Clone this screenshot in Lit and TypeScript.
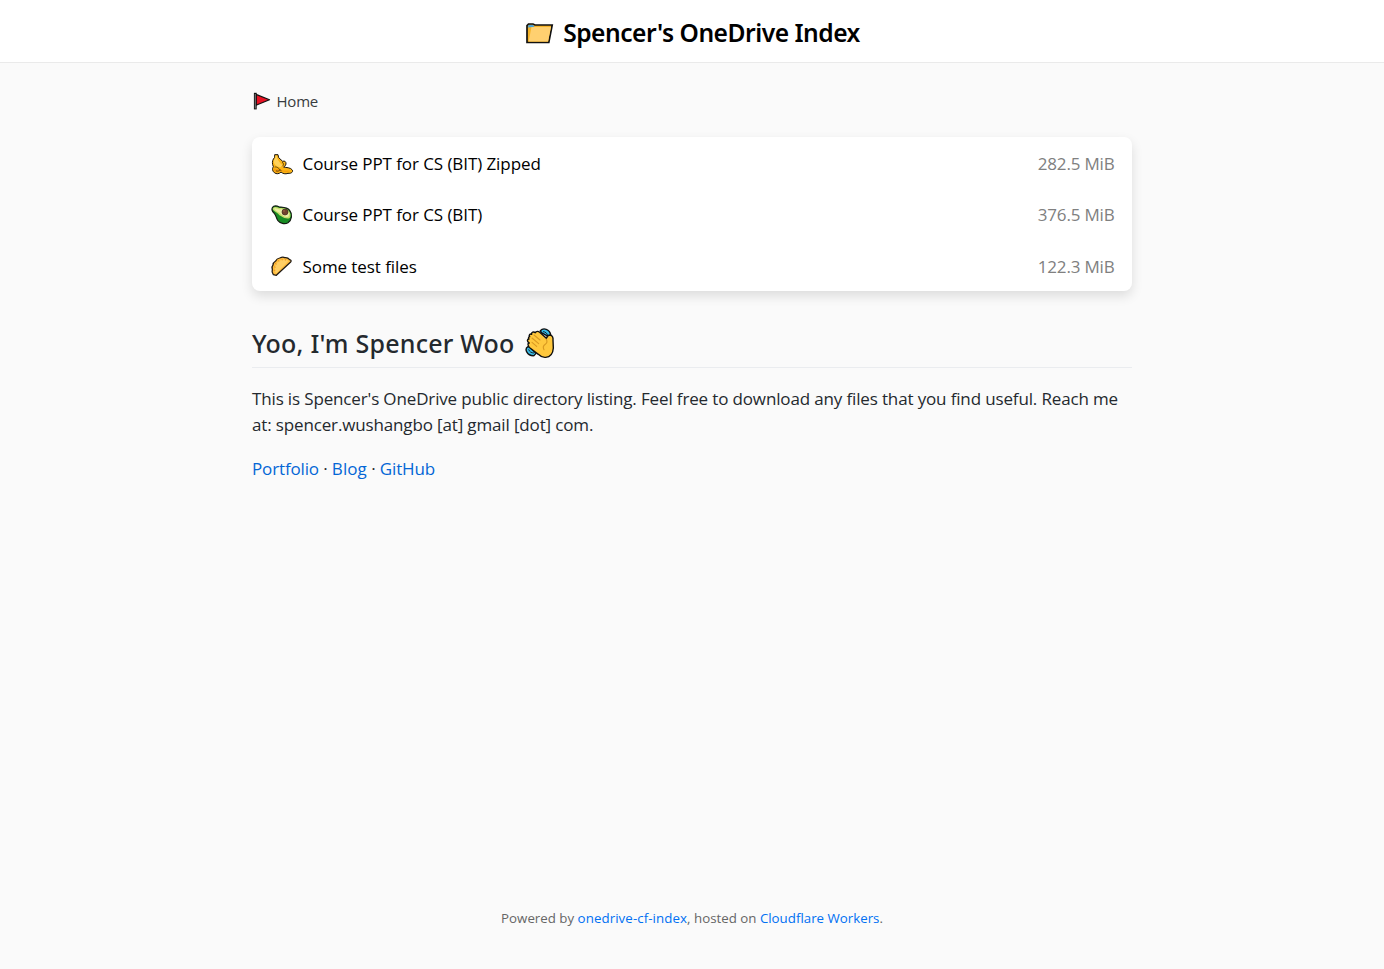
import { LitElement, html, css, svg } from "lit";
import { customElement } from "lit/decorators.js";

const banana = svg`
  <path d="M38 28 L48 28 L50 37 L62 48 C68 45 73 50 72 56 C71 61 68 63 65 65 C72 67 86 66 91 74 C94 80 88 85 78 84 C70 87 62 85 57 80 C52 86 43 87 37 82 C31 77 30 70 34 64 L32 58 C30 50 32 42 38 36Z" fill="#fdb515" stroke="#1c1710" stroke-width="3" stroke-linejoin="round"/>
  <path d="M40 31 L44 31 C45 42 52 51 62 60 L56 66 C42 64 33 55 36 44 L40 37Z" fill="#ffd25a"/>
  <path d="M34 66 C38 73 45 70 53 72 C62 77 74 77 85 76 C78 82 66 81 58 77 C50 83 39 82 36 76Z" fill="#f59d0e"/>
  <path d="M39 65 C45 63 51 70 57 76 M61 51 C66 54 66 59 62 62 M43 77 C48 79 52 76 54 74" fill="none" stroke="#33230d" stroke-width="2.2" stroke-linecap="round"/>`;

const avocado = svg`
  <path d="M31 34 C35 28 44 28 52 32 C60 33 75 32 83 42 C92 53 90 71 78 79 C68 85 54 81 47 72 C42 63 42 56 36 50 C31 45 28 39 31 34Z" fill="#178c23" stroke="#141b12" stroke-width="3.4" stroke-linejoin="round"/>
  <path d="M33 35 C38 30 46 33 52 35 C60 35 73 35 80 43 C86 50 87 59 83 65 C77 69 67 66 58 60 C49 55 47 49 40 46 C34 43 31 39 33 35Z" fill="#c6dd6b"/>
  <path d="M36 36 C42 34 49 38 55 39 C64 37 75 40 79 47 C83 54 81 61 77 62 C68 63 60 57 53 50 C46 46 38 43 36 36Z" fill="#e9f0a4"/>
  <circle cx="69" cy="47" r="9" fill="#71432d" stroke="#3d261d" stroke-width="2"/>
  <circle cx="66" cy="44" r="2.4" fill="#a86b47"/>`;

const dumpling = svg`
  <path d="M34 79 L43 81 L86 41 C89 38 87 35 83 34 C79 29 74 27 68 28 C63 25 58 27 53 29 C47 30 43 33 41 38 C36 41 33 45 33 50 C29 54 30 59 31 63 C29 69 31 75 34 79Z" fill="#ffbd3f" stroke="#211a13" stroke-width="3.8" stroke-linejoin="round"/>
  <path d="M40 72 C36 56 43 38 60 35 C68 33 75 35 79 38 L44 74Z" fill="#ffcf65"/>
  <path d="M36 55 L41 57 M39 44 L44 48 M48 35 L51 40 M60 31 L61 36 M71 32 L70 37 M35 66 L40 66" stroke="#e98d16" stroke-width="2.2"/>`;

const files = [
  { icon: banana, name: "Course PPT for CS (BIT) Zipped", size: "282.5 MiB" },
  { icon: avocado, name: "Course PPT for CS (BIT)", size: "376.5 MiB" },
  { icon: dumpling, name: "Some test files", size: "122.3 MiB" },
];

@customElement("app-root")
class AppRoot extends LitElement {
  static styles = css`
    :host {
      display: flex;
      flex-direction: column;
      min-height: 100vh;
      box-sizing: border-box;
      background: #fafafa;
      color: #24292e;
      font: 400 17px/26px "Open Sans", "Noto Sans", sans-serif;
    }
    svg { display: block; flex: none; }
    a { text-decoration: none; color: #0366d6; }
    header {
      height: 63px;
      box-sizing: border-box;
      padding-top: 4px;
      display: flex;
      align-items: center;
      justify-content: center;
      gap: 9px;
      background: #fff;
      border-bottom: 1px solid #eaeaea;
      color: #000;
      font-family: "Noto Sans", sans-serif;
      font-size: 24.6px;
      font-weight: 600;
      letter-spacing: -0.49px;
    }
    main { width: 880px; margin: 0 auto; flex: 1; }
    .crumb {
      display: flex;
      align-items: center;
      gap: 4.5px;
      height: 26px;
      margin: 25px 0 23px;
      font-size: 15px;
      letter-spacing: -0.2px;
      color: #383c40;
    }
    .card {
      background: #fff;
      border-radius: 8px;
      box-shadow: 0 5px 12px rgba(0, 0, 0, 0.12);
      color: #000;
      height: 154px;
      display: grid;
      grid-template-rows: 51px 51px 52px;
    }
    .row { display: flex; align-items: center; padding: 2px 17.5px 0 18px; }
    .row:last-child { padding-top: 3px; }
    .name { margin-left: 8.5px; flex: 1; letter-spacing: -0.08px; }
    .size { color: #808080; letter-spacing: -0.18px; }
    h2 {
      display: flex;
      align-items: center;
      gap: 9px;
      height: 47px;
      margin: 29px 0 0;
      border-bottom: 1px solid #eaecef;
      font-family: "Noto Sans", sans-serif;
      font-size: 25px;
      font-weight: 500;
      letter-spacing: 0.23px;
    }
    h2 > * { margin-bottom: 2px; }
    p { margin: 18px 0 0; letter-spacing: -0.145px; }
    .blog { letter-spacing: 0.1px; }
    footer {
      height: 26px;
      margin-bottom: 38px;
      text-align: center;
      color: #666;
      font-size: 13.3px;
    }
    footer a { color: #0070f3; }
    .repo { letter-spacing: 0.08px; }
  `;

  render() {
    return html`
      <header>
        <svg width="30" height="24" viewBox="0 0 30 24">
          <path d="M3 21.5 V4.6 L4.5 3 H9 L11 4 H28.2 L24.8 21.5 H3Z" fill="#f5b328" stroke="#111" stroke-width="1.7"/>
          <path d="M4.5 4 H9 L10.5 6 L4 6.5Z" fill="#4aa3d8"/>
          <path d="M7.5 6 H27 L24.1 20.6 H4.6Z" fill="#ffd070"/>
        </svg>
        <span>Spencer's OneDrive Index</span>
      </header>
      <main>
        <nav class="crumb">
          <svg width="20" height="20" viewBox="0 0 20 20">
            <path d="M4 3.4 L17.5 8.8 L4 14.2Z" fill="#e81224" stroke="#111" stroke-width="1.2" stroke-linejoin="round"/>
            <path d="M3.3 1.8 V18.4" stroke="#111" stroke-width="2.8"/>
            <path d="M3.3 3 V17.4" stroke="#777" stroke-width="1.1"/>
          </svg>
          <span>Home</span>
        </nav>
        <section class="card">
          ${files.map((f) => html`
            <div class="row">
              <svg width="24" height="24" viewBox="24 20 72 72">${f.icon}</svg>
              <span class="name">${f.name}</span>
              <span class="size">${f.size}</span>
            </div>`)}
        </section>
        <h2>
          <span>Yoo, I'm Spencer Woo</span>
          <svg width="32" height="34" viewBox="24 18 96 102">
            <path d="M73 32 C82 22 101 27 104 44 L98 50 L76 38Z M36 80 C24 87 33 108 54 107 L60 100 L43 82Z" fill="#39bde9" stroke="#101010" stroke-width="4.2" stroke-linejoin="round"/>
            <path d="M81 35 C88 35 94 40 95 47 M38 88 C40 95 46 99 54 99" fill="none" stroke="#101010" stroke-width="2.6"/>
            <path d="M41 50 C37 45 43 40 47 43 C45 36 53 34 58 38 C61 33 67 33 71 37 L91 55 C93 51 95 45 102 45 C110 46 112 54 111 61 L112 84 C111 99 104 111 89 112 C80 113 73 109 67 103 L42 84 C35 78 34 69 40 69 C32 64 33 57 39 57 C36 54 38 50 41 50Z" fill="#ffc83d" stroke="#101010" stroke-width="4.2" stroke-linejoin="round"/>
            <path d="M54 45 L72 60 M48 54 L68 71 M48 67 L62 79 M91 58 C94 64 94 69 88 73 C82 77 81 84 84 89" fill="none" stroke="#d99a22" stroke-width="3.4" stroke-linecap="round"/>
          </svg>
        </h2>
        <p>This is Spencer's OneDrive public directory listing. Feel free to download any files that you find useful. Reach me at: spencer.wushangbo [at] gmail [dot] com.</p>
        <p><a href="#">Portfolio</a> · <a class="blog" href="#">Blog</a> · <a href="#">GitHub</a></p>
      </main>
      <footer>Powered by <a class="repo" href="#">onedrive-cf-index</a>, hosted on <a href="#">Cloudflare Workers</a>.</footer>
    `;
  }
}
